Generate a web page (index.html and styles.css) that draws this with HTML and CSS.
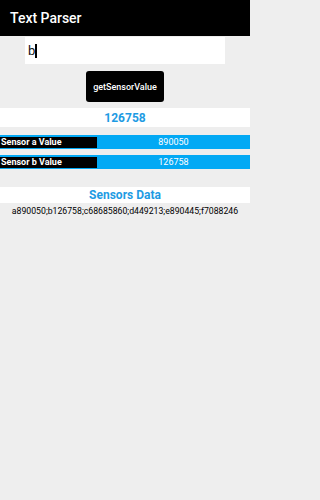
FILE: index.html
```html
<!DOCTYPE html>
<html>
<head>
<meta charset="utf-8">
<link rel="stylesheet" href="styles.css">
</head>
<body>
<div class="app">
  <header class="topbar">Text Parser</header>
  <div class="input"><span class="input-text">b</span><span class="cursor"></span></div>
  <div class="btn-wrap"><button class="btn">getSensorValue</button></div>
  <div class="result">126758</div>
  <div class="rows">
    <div class="row"><div class="label">Sensor a Value</div><div class="value">890050</div></div>
    <div class="row"><div class="label">Sensor b Value</div><div class="value">126758</div></div>
  </div>
  <div class="section-title">Sensors Data</div>
  <div class="data">a890050;b126758;c68685860;d449213;e890445;f7088246</div>
</div>
</body>
</html>
```

FILE: styles.css
```css
* { box-sizing: border-box; }
html, body { margin: 0; padding: 0; }
html { background: #eeeeee; }
body {
  background: #eeeeee;
  font-family: Roboto, "Noto Sans", sans-serif;
  width: 250px;
  height: 500px;
}
.app { display: flex; flex-direction: column; }
.topbar {
  height: 36px;
  background: #000;
  color: #fff;
  font-size: 14px;
  font-weight: 500;
  display: flex;
  align-items: center;
  padding-left: 10px;
}
.input {
  margin: 1px 25px 0;
  height: 27px;
  background: #fff;
  display: flex;
  align-items: center;
  padding-left: 3px;
  font-size: 13px;
  color: #111;
}
.cursor {
  display: inline-block;
  width: 2px;
  height: 14px;
  background: #000;
}
.btn-wrap { display: flex; justify-content: center; margin-top: 7px; }
.btn {
  width: 78px;
  height: 31px;
  background: #000;
  color: #fff;
  border: none;
  border-radius: 3px;
  font-family: Roboto, sans-serif;
  font-size: 9px;
  font-weight: 500;
  padding: 0;
}
.result {
  margin-top: 6px;
  height: 19px;
  background: #fff;
  color: #1e9be3;
  font-weight: 700;
  font-size: 12px;
  display: flex;
  align-items: center;
  justify-content: center;
}
.rows { margin-top: 8px; display: flex; flex-direction: column; gap: 6px; }
.row {
  height: 14px;
  background: #03a9f4;
  display: flex;
  align-items: center;
  color: #fff;
  font-size: 9px;
}
.label {
  width: 97px;
  height: 11px;
  background: #000;
  font-weight: 700;
  display: flex;
  align-items: center;
  padding-left: 1px;
}
.value { flex: 1; text-align: center; }
.section-title {
  margin-top: 18px;
  height: 16px;
  background: #fff;
  color: #1e9be3;
  font-weight: 700;
  font-size: 12px;
  display: flex;
  align-items: center;
  justify-content: center;
}
.data {
  margin-top: 3px;
  text-align: center;
  font-size: 8.7px;
  color: #000;
}
```
